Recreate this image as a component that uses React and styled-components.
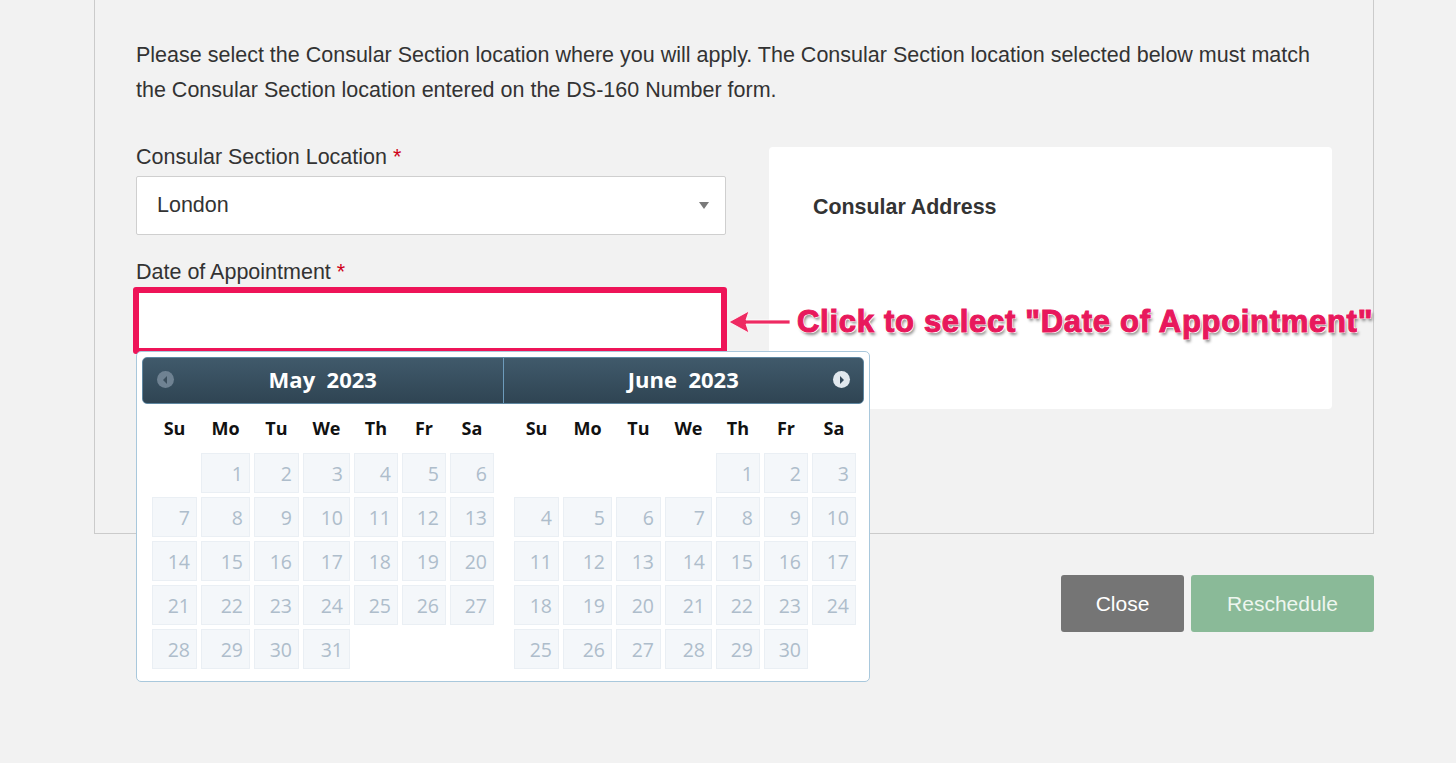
import React from 'react';
import styled, { createGlobalStyle } from 'styled-components';

const GlobalStyle = createGlobalStyle`
  html, body {
    min-height: 100%;
  }
  body {
    margin: 0;
    background: #f2f2f2;
    font-family: "Liberation Sans", Arial, sans-serif;
    color: #333;
  }
`

const Page = styled.div`
  width: 1280px;
  min-height: 763px;
  margin-left: 94px;
`

const Panel = styled.div`
  border: 1px solid #cbcbcb;
  border-top: none;
  padding: 38px 41px 124px 41px;
`

const Intro = styled.p`
  margin: 0;
  font-size: 21.5px;
  line-height: 35px;
  color: #333;
`

const FormRow = styled.div`
  position: relative;
  display: flex;
  align-items: flex-start;
  gap: 43px;
  margin-top: 35px;
`

const LeftCol = styled.div`
  position: relative;
  width: 590px;
  flex: none;
`

const Label = styled.div`
  font-size: 21.5px;
  line-height: 28px;
  color: #333;
  margin-top: ${p => p.$gap || 0}px;
`

const Req = styled.span`
  color: #d0021b;
`

const SelectBox = styled.div`
  position: relative;
  box-sizing: border-box;
  height: 59px;
  margin-top: 5px;
  padding-left: 20px;
  display: flex;
  align-items: center;
  background: #fff;
  border: 1px solid #cfcfcf;
  border-radius: 2px;
  font-size: 21.5px;
  color: #333;
`

const Caret = styled.span`
  position: absolute;
  right: 16px;
  top: 25px;
  width: 0;
  height: 0;
  border-left: 5px solid transparent;
  border-right: 5px solid transparent;
  border-top: 7px solid #7a7a7a;
`

const DateInput = styled.div`
  box-sizing: border-box;
  width: 594px;
  height: 67px;
  margin: 1px 0 0 -3px;
  background: #fff;
  border: 6px solid #ee1458;
  border-radius: 3px;
`

const Calendar = styled.div`
  position: absolute;
  top: 208px;
  left: 0;
  z-index: 2;
  box-sizing: border-box;
  width: 734px;
  padding: 5px 5px 12px;
  background: #fff;
  border: 1px solid #a9c8dc;
  border-radius: 5px;
  font-family: "Open Sans", "DejaVu Sans", sans-serif;
`

const CalHeader = styled.div`
  display: flex;
  height: 47px;
  box-sizing: border-box;
  border: 1px solid #5f87a1;
  border-radius: 5px;
  background: linear-gradient(#405a6b, #2f4453);
  overflow: hidden;
`

const HeadHalf = styled.div`
  position: relative;
  flex: 1;
  display: flex;
  align-items: center;
  justify-content: center;
  padding-bottom: 3px;
  color: #fff;
  font-size: 22px;
  font-weight: 700;
  white-space: pre;
  border-left: ${p => (p.$divider ? '1px solid #6d9bbb' : 'none')};
`

const NavIcon = styled.span`
  position: absolute;
  top: 13px;
  ${p => (p.$side === 'left' ? 'left: 14px;' : 'right: 13px;')}
  width: 17px;
  height: 17px;
  border-radius: 50%;
  background: ${p => (p.$side === 'left' ? '#6f8292' : '#e1e8ee')};
  display: flex;
  align-items: center;
  justify-content: center;
`

const Months = styled.div`
  display: flex;
`

const Month = styled.div`
  width: 361px;
  box-sizing: border-box;
  padding-left: ${p => p.$pad}px;
`

const cols = '45px 49px 45px 47px 44px 44px 44px'

const DayNames = styled.div`
  display: grid;
  grid-template-columns: ${cols};
  column-gap: 4px;
  height: 40px;
  margin-top: 4px;
  align-items: center;
`

const DayName = styled.div`
  text-align: center;
  font-size: 18px;
  font-weight: 700;
  color: #111;
`

const Days = styled.div`
  display: grid;
  grid-template-columns: ${cols};
  grid-auto-rows: 40px;
  gap: 4px;
  margin-top: 5px;
`

const Day = styled.div`
  box-sizing: border-box;
  display: flex;
  align-items: center;
  justify-content: flex-end;
  padding-right: 6px;
  font-size: 19.5px;
  color: #aebdcb;
  background: ${p => (p.$empty ? 'transparent' : '#f4f7fa')};
  border: 1px solid ${p => (p.$empty ? 'transparent' : '#eaeff4')};
`

const AddressCard = styled.div`
  box-sizing: border-box;
  width: 563px;
  height: 262px;
  margin-top: 4px;
  padding: 46px 44px;
  background: #fff;
  border-radius: 4px;
`

const CardTitle = styled.div`
  font-size: 21.4px;
  font-weight: 700;
  line-height: 28px;
  color: #333;
`

const Callout = styled.div`
  position: absolute;
  left: 592px;
  top: 161px;
  display: flex;
  align-items: center;
  gap: 5px;
  z-index: 3;
`

const CalloutText = styled.span`
  font-family: "Liberation Sans", Arial, sans-serif;
  font-size: 31px;
  font-weight: 700;
  letter-spacing: 0.7px;
  color: #e8185c;
  white-space: nowrap;
  -webkit-text-stroke: 1.1px #e8185c;
  text-shadow:
    -1px -1px 0 #fff, 1px -1px 0 #fff, -1px 1px 0 #fff, 1px 1px 0 #fff,
    2px 3px 3px rgba(0, 0, 0, 0.45);
`

const Actions = styled.div`
  display: flex;
  justify-content: flex-end;
  gap: 7px;
  margin-top: 41px;
`

const Button = styled.button`
  height: 57px;
  width: ${p => p.$w}px;
  border: none;
  border-radius: 3px;
  background: ${p => p.$bg};
  color: ${p => p.$fg};
  font-family: "Liberation Sans", Arial, sans-serif;
  font-size: 21px;
`

const names = ['Su', 'Mo', 'Tu', 'We', 'Th', 'Fr', 'Sa']

const buildDays = (offset, total) => {
  const out = []
  for (let i = 0; i < offset; i++) out.push(null)
  for (let d = 1; d <= total; d++) out.push(d)
  return out
}

const MonthGrid = ({ offset, total, pad }) => (
  <Month $pad={pad}>
    <DayNames>
      {names.map(n => <DayName key={n}>{n}</DayName>)}
    </DayNames>
    <Days>
      {buildDays(offset, total).map((d, i) =>
        d ? <Day key={i}>{d}</Day> : <Day key={i} $empty />
      )}
    </Days>
  </Month>
)

export default function App() {
  return (
    <>
      <GlobalStyle />
      <Page>
        <Panel>
          <Intro>
            Please select the Consular Section location where you will apply. The Consular Section location selected below must match the Consular Section location entered on the DS-160 Number form.
          </Intro>
          <FormRow>
            <LeftCol>
              <Label>Consular Section Location <Req>*</Req></Label>
              <SelectBox>
                London
                <Caret />
              </SelectBox>
              <Label $gap={23}>Date of Appointment <Req>*</Req></Label>
              <DateInput />
              <Calendar>
                <CalHeader>
                  <HeadHalf>
                    <NavIcon $side="left">
                      <svg width="7" height="8" viewBox="0 0 7 8"><path d="M5 0 L1 4 L5 8 Z" fill="#3b4e5c" /></svg>
                    </NavIcon>
                    May  2023
                  </HeadHalf>
                  <HeadHalf $divider>
                    June  2023
                    <NavIcon $side="right">
                      <svg width="7" height="8" viewBox="0 0 7 8"><path d="M2 0 L6 4 L2 8 Z" fill="#34495a" /></svg>
                    </NavIcon>
                  </HeadHalf>
                </CalHeader>
                <Months>
                  <MonthGrid offset={1} total={31} pad={10} />
                  <MonthGrid offset={4} total={30} pad={11} />
                </Months>
              </Calendar>
            </LeftCol>
            <AddressCard>
              <CardTitle>Consular Address</CardTitle>
            </AddressCard>
            <Callout>
              <svg width="64" height="26" viewBox="0 0 64 26">
                <path d="M1 13 L21 2 L18 11 L62 11 L62 15 L18 15 L21 24 Z" fill="#ee2a62" stroke="#fff" strokeWidth="0.8" />
              </svg>
              <CalloutText>Click to select "Date of Appointment"</CalloutText>
            </Callout>
          </FormRow>
        </Panel>
        <Actions>
          <Button $w={123} $bg="#757575" $fg="#fff">Close</Button>
          <Button $w={183} $bg="#8aba98" $fg="#eef6ef">Reschedule</Button>
        </Actions>
      </Page>
    </>
  )
}
